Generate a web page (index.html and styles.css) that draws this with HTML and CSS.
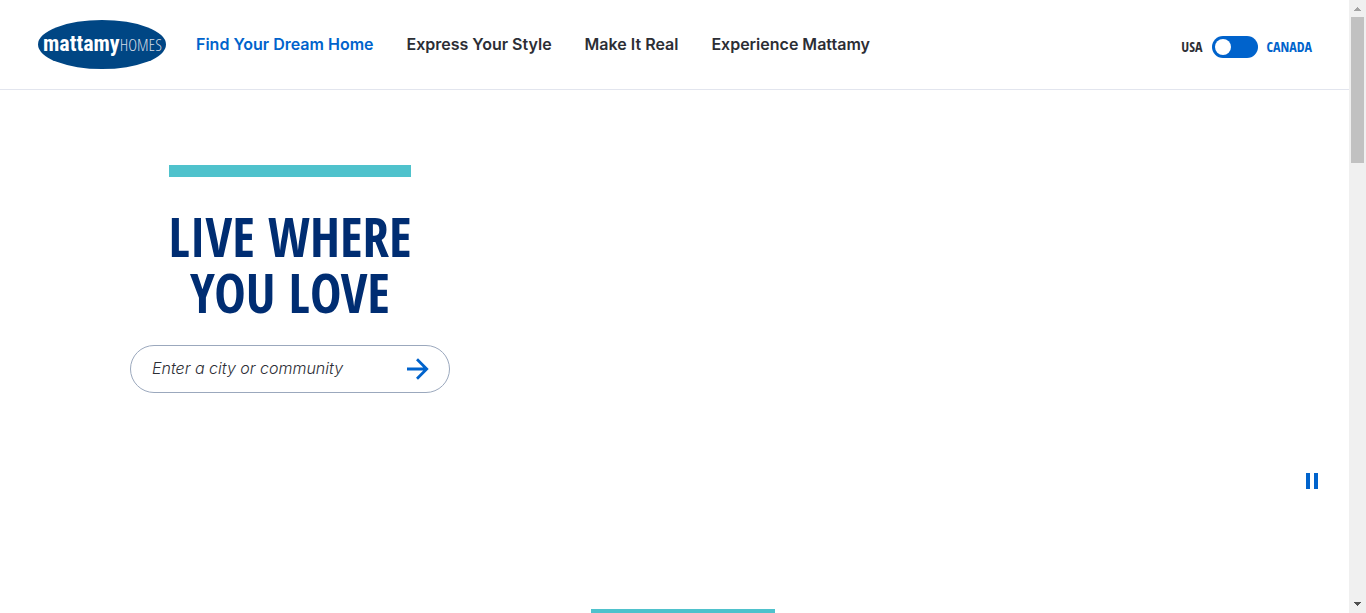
FILE: index.html
```html
<!DOCTYPE html>
<html lang="en">
<head>
<meta charset="utf-8">
<meta name="viewport" content="width=device-width, initial-scale=1">
<title>Mattamy Homes</title>
<link rel="stylesheet" href="styles.css">
</head>
<body>
<div class="viewport">
  <div class="page">
    <header class="header">
      <a class="logo" href="#" aria-label="Mattamy Homes">
        <svg width="128" height="49" viewBox="0 0 128 49" aria-hidden="true">
          <ellipse cx="64" cy="24.500" rx="64" ry="24.500" fill="#004684"/>
          <text class="logo-text" x="5" y="31">mattamy<tspan class="logo-light">HOMES</tspan></text>
        </svg>
      </a>
      <nav class="nav" aria-label="Main">
        <a class="nav-link nav-link-active" href="#">Find Your Dream Home</a>
        <a class="nav-link" href="#">Express Your Style</a>
        <a class="nav-link" href="#">Make It Real</a>
        <a class="nav-link" href="#">Experience Mattamy</a>
      </nav>
      <label class="country">
        <span>USA</span>
        <input class="switch" type="checkbox" role="switch" aria-label="Country">
        <span class="country-active">CANADA</span>
      </label>
    </header>
    <main>
      <section class="hero">
        <div class="hero-content">
          <div class="accent"></div>
          <h1 class="title">LIVE WHERE<br>YOU LOVE</h1>
          <form class="search">
            <input class="search-input" type="text" placeholder="Enter a city or community" aria-label="Enter a city or community">
            <button class="search-button" type="button" aria-label="Search">
              <svg width="22" height="22" viewBox="0 0 22 22" fill="none" stroke="#0063cc" stroke-width="2.800" aria-hidden="true"><path d="M0 11H20M10 1.300L19.700 11L10 20.700"/></svg>
            </button>
          </form>
        </div>
        <button class="pause" type="button" aria-label="Pause video">
          <svg width="12" height="16" viewBox="0 0 12 16" fill="#0063cc" aria-hidden="true"><path d="M0 0h4v16H0zM8 0h4v16H8z"/></svg>
        </button>
      </section>
      <section class="next">
        <div class="next-accent"></div>
      </section>
    </main>
  </div>
  <div class="scrollbar" aria-hidden="true">
    <svg class="scroll-arrow" width="17" height="17" viewBox="0 0 17 17" shape-rendering="crispEdges" fill="#a3a3a3"><path d="M8 7h1v1h1v1h1v1h1v1H5v-1h1V9h1V8h1z"/></svg>
    <div class="scroll-track"><div class="scroll-thumb"></div></div>
    <svg class="scroll-arrow" width="17" height="17" viewBox="0 0 17 17" shape-rendering="crispEdges" fill="#505050"><path d="M5 6h7v1h-1v1h-1v1H9v1H8V9H7V8H6V7H5z"/></svg>
  </div>
</div>
</body>
</html>
```
FILE: styles.css
```css
* { box-sizing: border-box; }
body {
  margin: 0;
  background: #fff;
  color: #2c2e35;
  font-family: Inter, "Liberation Sans", sans-serif;
}
button { padding: 0; border: 0; background: none; cursor: pointer; }
svg { display: block; }
.viewport { display: flex; height: 100vh; }
.page { flex: 1; min-width: 0; overflow: hidden; }
.header {
  display: flex;
  align-items: center;
  height: 90px;
  padding: 0 37px 0 38px;
  border-bottom: 1px solid #e2e5ee;
}
.logo-text { font: bold 22px "Roboto Condensed", sans-serif; fill: #fff; }
.logo-light { font: 300 17px "Open Sans Condensed Light", "Roboto Condensed", sans-serif; fill: #d5dce6; }
.nav { display: flex; gap: 33px; margin-left: 30px; padding-bottom: 2px; }
.nav-link {
  color: inherit;
  font-size: 16px;
  font-weight: 600;
  line-height: 24px;
  text-decoration: none;
  white-space: nowrap;
}
.nav-link-active { color: #0063cc; }
.country {
  display: flex;
  align-items: center;
  gap: 9px;
  margin-left: auto;
  padding-top: 4px;
  font: bold 14px/24px "Open Sans Condensed", "Roboto Condensed", sans-serif;
}
.country-active { color: #0063cc; }
.switch {
  appearance: none;
  width: 46px;
  height: 22px;
  margin: 0;
  padding: 3px;
  border-radius: 11px;
  background: #0063cc;
}
.switch::before {
  content: "";
  display: block;
  width: 16px;
  height: 16px;
  border-radius: 50%;
  background: #fff;
}
.switch:checked::before { margin-left: auto; }
.hero {
  display: flex;
  justify-content: space-between;
  align-items: flex-end;
  min-height: 519px;
  padding: 75px 31px 120px 130px;
}
.hero-content {
  display: flex;
  flex-direction: column;
  align-items: center;
  align-self: flex-start;
  width: 320px;
}
.accent { width: 242px; height: 12px; background: #4fc2cc; }
.title {
  margin: 32px 0 24px;
  color: #002d72;
  font: bold 53px/56px "Open Sans Condensed", "Roboto Condensed", sans-serif;
  text-align: center;
  white-space: nowrap;
}
.search {
  display: flex;
  align-items: center;
  width: 100%;
  height: 48px;
  padding: 0 20px 0 21px;
  border: 1px solid #9ba8bd;
  border-radius: 24px;
}
.search-input {
  flex: 1;
  min-width: 0;
  padding: 0 0 2px;
  border: 0;
  outline: 0;
  background: none;
  color: #2c2e35;
  font: italic 300 16px/24px Inter, "Liberation Sans", sans-serif;
}
.search-input::placeholder { color: #2c2e35; opacity: 1; }
.next {
  display: flex;
  justify-content: center;
  width: 100vw;
}
.next-accent { width: 184px; height: 12px; background: #4fc2cc; }
.scrollbar { display: flex; flex-direction: column; width: 17px; background: #f0f0f0; }
.scroll-track { flex: 1; padding: 0 2px; }
.scroll-thumb { height: 146px; background: #c1c1c1; }
```
